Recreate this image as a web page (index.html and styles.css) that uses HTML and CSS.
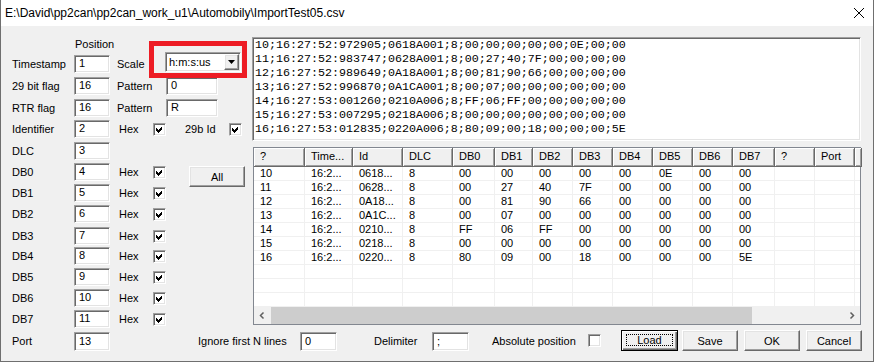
FILE: index.html
```html
<!DOCTYPE html>
<html lang="cs">
<head>
  <meta charset="UTF-8" />
  <title>ImportTest05.csv</title>
  <link rel="stylesheet" href="styles.css">
</head>
<body>
  <div class="window">
    <div class="titlebar">
      <span class="title">E:\David\pp2can\pp2can_work_u1\Automobily\ImportTest05.csv</span>
      <svg class="close" width="10" height="10" viewBox="0 0 10 10"><path d="M0 0L10 10M10 0L0 10" stroke="#000" stroke-width="1" fill="none"/></svg>
    </div>

    <div class="client">
      <div class="main">
        <div class="form">
          <div class="row head"><span class="lbl"></span><span class="colhead">Position</span></div>
          <div class="row">
            <span class="lbl">Timestamp</span><span class="edit sunken">1</span>
            <span class="lbl2 wide">Scale</span>
            <div class="combo sunken">
              <span class="combo-text">h:m:s:us</span>
              <span class="drop raised"><svg width="7" height="4" viewBox="0 0 7 4"><path d="M0 0H7L3.5 4Z" fill="#000"/></svg></span>
            </div>
          </div>
          <div class="row">
            <span class="lbl">29 bit flag</span><span class="edit sunken">16</span>
            <span class="lbl2 wide">Pattern</span><span class="edit pattern sunken">0</span>
          </div>
          <div class="row">
            <span class="lbl">RTR flag</span><span class="edit sunken">16</span>
            <span class="lbl2 wide">Pattern</span><span class="edit pattern sunken">R</span>
          </div>
          <div class="row">
            <span class="lbl">Identifier</span><span class="edit sunken">2</span>
            <span class="lbl2">Hex</span>
            <span class="check sunken"><svg width="9" height="9" viewBox="0 0 9 9"><path d="M1 3L3 5L7 1V4L3 8L1 6Z"/></svg></span>
            <span class="id29">29b Id</span>
            <span class="check sunken"><svg width="9" height="9" viewBox="0 0 9 9"><path d="M1 3L3 5L7 1V4L3 8L1 6Z"/></svg></span>
          </div>
          <div class="row">
            <span class="lbl">DLC</span><span class="edit sunken">3</span>
          </div>
          <div class="row">
            <span class="lbl">DB0</span><span class="edit sunken">4</span>
            <span class="lbl2">Hex</span>
            <span class="check sunken"><svg width="9" height="9" viewBox="0 0 9 9"><path d="M1 3L3 5L7 1V4L3 8L1 6Z"/></svg></span>
            <span class="btn all raised">All</span>
          </div>
          <div class="row">
            <span class="lbl">DB1</span><span class="edit sunken">5</span>
            <span class="lbl2">Hex</span>
            <span class="check sunken"><svg width="9" height="9" viewBox="0 0 9 9"><path d="M1 3L3 5L7 1V4L3 8L1 6Z"/></svg></span>
          </div>
          <div class="row">
            <span class="lbl">DB2</span><span class="edit sunken">6</span>
            <span class="lbl2">Hex</span>
            <span class="check sunken"><svg width="9" height="9" viewBox="0 0 9 9"><path d="M1 3L3 5L7 1V4L3 8L1 6Z"/></svg></span>
          </div>
          <div class="row">
            <span class="lbl">DB3</span><span class="edit sunken">7</span>
            <span class="lbl2">Hex</span>
            <span class="check sunken"><svg width="9" height="9" viewBox="0 0 9 9"><path d="M1 3L3 5L7 1V4L3 8L1 6Z"/></svg></span>
          </div>
          <div class="row">
            <span class="lbl">DB4</span><span class="edit sunken">8</span>
            <span class="lbl2">Hex</span>
            <span class="check sunken"><svg width="9" height="9" viewBox="0 0 9 9"><path d="M1 3L3 5L7 1V4L3 8L1 6Z"/></svg></span>
          </div>
          <div class="row">
            <span class="lbl">DB5</span><span class="edit sunken">9</span>
            <span class="lbl2">Hex</span>
            <span class="check sunken"><svg width="9" height="9" viewBox="0 0 9 9"><path d="M1 3L3 5L7 1V4L3 8L1 6Z"/></svg></span>
          </div>
          <div class="row">
            <span class="lbl">DB6</span><span class="edit sunken">10</span>
            <span class="lbl2">Hex</span>
            <span class="check sunken"><svg width="9" height="9" viewBox="0 0 9 9"><path d="M1 3L3 5L7 1V4L3 8L1 6Z"/></svg></span>
          </div>
          <div class="row">
            <span class="lbl">DB7</span><span class="edit sunken">11</span>
            <span class="lbl2">Hex</span>
            <span class="check sunken"><svg width="9" height="9" viewBox="0 0 9 9"><path d="M1 3L3 5L7 1V4L3 8L1 6Z"/></svg></span>
          </div>

          <!-- red annotation frame around the Scale combo -->
          <div class="mark"></div>
        </div>

        <div class="side">
          <div class="memo sunken">10;16:27:52:972905;0618A001;8;00;00;00;00;00;0E;00;00
11;16:27:52:983747;0628A001;8;00;27;40;7F;00;00;00;00
12;16:27:52:989649;0A18A001;8;00;81;90;66;00;00;00;00
13;16:27:52:996870;0A1CA001;8;00;07;00;00;00;00;00;00
14;16:27:53:001260;0210A006;8;FF;06;FF;00;00;00;00;00
15;16:27:53:007295;0218A006;8;00;00;00;00;00;00;00;00
16;16:27:53:012835;0220A006;8;80;09;00;18;00;00;00;5E</div>

          <div class="list">
            <div class="lv-head">
              <span>?</span><span>Time...</span><span>Id</span><span>DLC</span>
              <span>DB0</span><span>DB1</span><span>DB2</span><span>DB3</span>
              <span>DB4</span><span>DB5</span><span>DB6</span><span>DB7</span>
              <span>?</span><span>Port</span><span></span>
            </div>
            <div class="lv-body" id="lvBody"></div>
            <div class="hscroll">
              <span class="arrow"><svg width="17" height="17" viewBox="0 0 17 17"><path d="M9.5 5.5L6.5 8.5L9.5 11.5" fill="none" stroke="#606060" stroke-width="1.5"/></svg></span>
              <span class="thumb"></span>
              <span class="track"></span>
              <span class="arrow"><svg width="17" height="17" viewBox="0 0 17 17"><path d="M7.5 5.5L10.5 8.5L7.5 11.5" fill="none" stroke="#606060" stroke-width="1.5"/></svg></span>
            </div>
          </div>
        </div>
      </div>

      <div class="bottom">
        <span class="lbl">Port</span><span class="edit sunken">13</span>
        <span class="ignore">Ignore first N lines</span><span class="edit short sunken">0</span>
        <span class="delim">Delimiter</span><span class="edit short sunken">;</span>
        <span class="abs">Absolute position</span>
        <span class="check sunken"></span>
        <span class="btn load"><span class="focus">Load</span></span>
        <span class="btn save raised">Save</span>
        <span class="btn ok raised">OK</span>
        <span class="btn cancel raised">Cancel</span>
      </div>
    </div>
  </div>

  <script>
    const rows = [
      ["10", "16:2...", "0618...", "8", "00", "00", "00", "00", "00", "0E", "00", "00"],
      ["11", "16:2...", "0628...", "8", "00", "27", "40", "7F", "00", "00", "00", "00"],
      ["12", "16:2...", "0A18...", "8", "00", "81", "90", "66", "00", "00", "00", "00"],
      ["13", "16:2...", "0A1C...", "8", "00", "07", "00", "00", "00", "00", "00", "00"],
      ["14", "16:2...", "0210...", "8", "FF", "06", "FF", "00", "00", "00", "00", "00"],
      ["15", "16:2...", "0218...", "8", "00", "00", "00", "00", "00", "00", "00", "00"],
      ["16", "16:2...", "0220...", "8", "80", "09", "00", "18", "00", "00", "00", "5E"]
    ];

    const body = document.getElementById("lvBody");
    for (let i = 0; i < 10; i++) {
      const data = rows[i] || [];
      const row = document.createElement("div");
      row.className = "lv-row";
      for (let c = 0; c < 15; c++) {
        const cell = document.createElement("span");
        cell.textContent = data[c] || "";
        row.appendChild(cell);
      }
      body.appendChild(row);
    }
  </script>
</body>
</html>
```

FILE: styles.css
```css
* {
  box-sizing: border-box;
}

body {
  margin: 0;
  font-family: "Liberation Sans", Arial, sans-serif;
  font-size: 11px;
  color: #000;
  background: #f0f0f0;
}

.window {
  width: 874px;
  height: 362px;
  border: 1px solid #6f6f6f;
  border-top: none;
  background: #f0f0f0;
  display: flex;
  flex-direction: column;
}

.titlebar {
  height: 26px;
  flex: none;
  background: #fff;
  display: flex;
  align-items: center;
  justify-content: space-between;
  padding: 0 9px 0 4px;
}

.title {
  font-size: 12px;
}

/* classic 3d edges */
.sunken {
  border: 1px solid;
  border-color: #a0a0a0 #fff #fff #a0a0a0;
  box-shadow: inset 1px 1px #696969, inset -1px -1px #e3e3e3;
}

.raised {
  border: 1px solid;
  border-color: #fff #696969 #696969 #fff;
  box-shadow: inset -1px -1px #a0a0a0, inset 1px 1px #e3e3e3;
  background: #f0f0f0;
}

.client {
  padding: 11px 11px 0 11px;
}

.main {
  display: flex;
}

.form {
  position: relative;
  width: 240px;
  display: grid;
  grid-template-rows: 18px 22px 22px 21px 22px 21px 21px 21px 22px 20px 21px 21px 21px 18px;
}

.row {
  display: flex;
  align-items: center;
  height: 18px;
}

.row.head {
  align-items: flex-start;
  line-height: 14px;
}

.lbl {
  width: 62px;
  flex: none;
}

.colhead {
  padding-left: 1px;
}

.edit {
  width: 36px;
  height: 18px;
  flex: none;
  background: #fff;
  padding: 0 4px;
  line-height: 15px;
}

.edit.pattern {
  width: 52px;
}

.lbl2 {
  width: 36px;
  margin-left: 7px;
  padding-left: 2px;
  flex: none;
}

.lbl2.wide {
  width: 49px;
  padding-left: 0;
}

.combo {
  width: 76px;
  height: 20px;
  margin: -3px 0 0 -1px;
  align-self: flex-start;
  background: #fff;
  display: flex;
  padding: 1px;
}

.combo-text {
  flex: 1;
  padding-left: 2px;
  line-height: 16px;
}

.drop {
  width: 15px;
  height: 16px;
  display: flex;
  align-items: center;
  justify-content: center;
}

.check {
  width: 13px;
  height: 13px;
  flex: none;
  background: #fff;
  padding: 1px;
  display: flex;
}

.check svg {
  display: block;
  shape-rendering: crispEdges;
}

.id29 {
  width: 44px;
  margin-left: 19px;
  flex: none;
}

.btn {
  width: 56px;
  height: 21px;
  flex: none;
  display: flex;
  align-items: center;
  justify-content: center;
}

.all {
  margin-left: 23px;
  align-self: flex-start;
  margin-top: 3px;
}

.mark {
  position: absolute;
  left: 137px;
  top: 4px;
  width: 98px;
  height: 37px;
  border: 5px solid #ed1c24;
}

.side {
  width: 609px;
  display: flex;
  flex-direction: column;
}

.memo {
  height: 104px;
  background: #fff;
  font-family: "Liberation Mono", "Courier New", monospace;
  font-size: 11.67px;
  line-height: 14px;
  padding: 0 2px;
  white-space: pre;
  overflow: hidden;
}

.list {
  height: 178px;
  margin: 6px 0 0 1px;
  border: 1px solid #828790;
  background: #fff;
  display: flex;
  flex-direction: column;
}

.lv-head,
.lv-row {
  display: grid;
  grid-template-columns: 51px 48px 50px 50px 42px 38px 40px 40px 40px 40px 40px 42px 40px 40px 1fr;
}

.lv-head {
  height: 19px;
  flex: none;
  background: #f0f0f0;
}

.lv-head span {
  border-right: 1px solid #696969;
  border-bottom: 1px solid #696969;
  box-shadow: inset 1px 1px #fff, inset -1px -1px #a0a0a0;
  padding-left: 6px;
  line-height: 17px;
  white-space: nowrap;
  overflow: hidden;
}

.lv-body {
  flex: 1;
  overflow: hidden;
}

.lv-row {
  height: 14px;
}

.lv-row span {
  border-right: 1px solid #f0f0f0;
  border-bottom: 1px solid #f0f0f0;
  padding-left: 6px;
  line-height: 13px;
  white-space: nowrap;
  overflow: hidden;
}

.hscroll {
  height: 17px;
  flex: none;
  display: flex;
  background: #f0f0f0;
}

.arrow {
  width: 17px;
  height: 17px;
  flex: none;
}

.arrow svg {
  display: block;
}

.thumb {
  width: 481px;
  background: #cdcdcd;
}

.track {
  flex: 1;
}

.bottom {
  display: flex;
  align-items: flex-end;
  height: 21px;
  margin-top: 2px;
}

.bottom .lbl,
.bottom .ignore,
.bottom .delim,
.bottom .abs,
.bottom .check {
  align-self: center;
}

.bottom .edit {
  height: 19px;
  line-height: 16px;
}

.ignore {
  width: 102px;
  margin-left: 88px;
  flex: none;
}

.edit.short {
  width: 37px;
}

.delim {
  width: 58px;
  margin-left: 37px;
  flex: none;
}

.abs {
  width: 96px;
  margin-left: 23px;
  flex: none;
}

.load {
  width: 57px;
  margin-left: 20px;
  border: 1px solid #000;
  box-shadow: inset 1px 1px #fff, inset -1px -1px #696969, inset -2px -2px #a0a0a0;
  background: #f0f0f0;
  padding: 3px 4px 4px 4px;
}

.focus {
  flex: 1;
  align-self: stretch;
  border: 1px dotted #000;
  display: flex;
  align-items: center;
  justify-content: center;
}

.save {
  margin-left: 4px;
}

.ok,
.cancel {
  margin-left: 6px;
}
```
